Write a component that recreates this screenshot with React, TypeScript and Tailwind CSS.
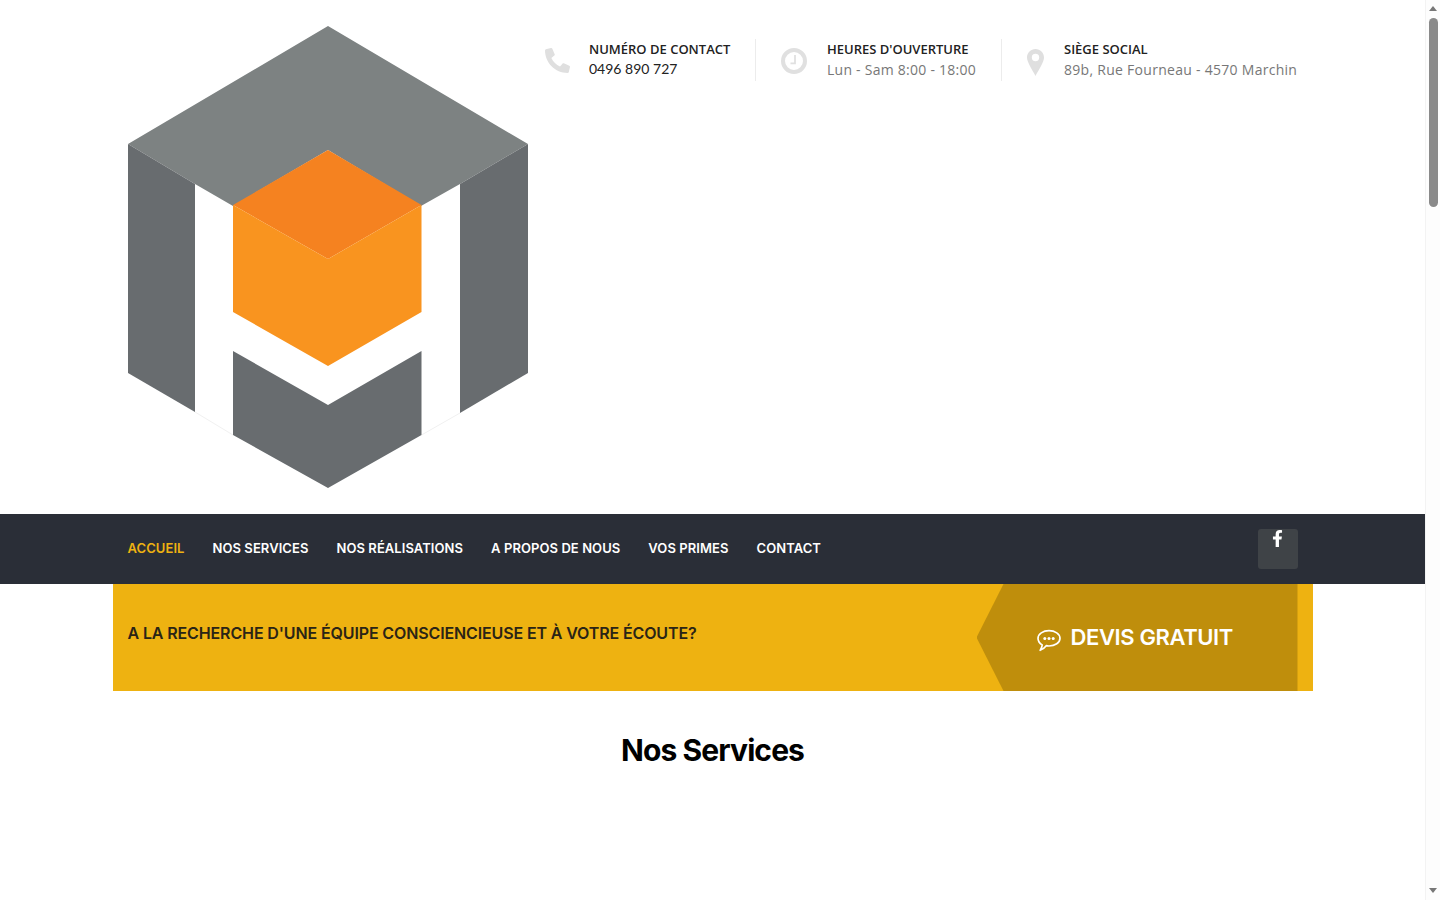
import { FaFacebookF, FaPhone } from "react-icons/fa";

const navItems = [
  "ACCUEIL",
  "NOS SERVICES",
  "NOS RÉALISATIONS",
  "A PROPOS DE NOUS",
  "VOS PRIMES",
  "CONTACT",
];

function Logo() {
  return (
    <svg width="400" height="462" viewBox="128 26 400 462" className="block shrink-0">
      <path d="M195 412 233 435M460 413 421.500 435" stroke="#f1f1f1" strokeWidth="1" />
      <polygon fill="#7d8282" points="128,144 328,26 528,144 460,184 421,206 328,150 233,206 195,184" />
      <polygon fill="#686c6f" points="128,144 195,184 195,412 128,373" />
      <polygon fill="#686c6f" points="528,144 460,184 460,413 528,373" />
      <polygon fill="#f58220" points="328,150 421.5,205 328,259 233,205" />
      <polygon fill="#f9941f" points="233,205 328,259 421.5,205 421.5,312 328,366 233,312" />
      <polygon fill="#686c6f" points="233,351 328,405 421.5,351 421.5,435 328,488 233,435" />
    </svg>
  );
}

function ClockIcon() {
  return (
    <svg width="26" height="26" viewBox="0 0 26 26" className="block">
      <circle cx="13" cy="13" r="11" fill="none" stroke="#e0e0e0" strokeWidth="4" />
      <path d="M14 7v8.300H9.500" fill="none" stroke="#e0e0e0" strokeWidth="1.800" />
    </svg>
  );
}

function MarkerIcon() {
  return (
    <svg width="17" height="27" viewBox="0 0 17 27" className="block">
      <path
        fillRule="evenodd"
        fill="#dfdfdf"
        d="M8.500 0C13.200 0 17 3.800 17 8.500c0 4.800-5.400 12.300-8.500 18.500C5.400 20.800 0 13.300 0 8.500 0 3.800 3.800 0 8.500 0Zm0 4.800a3.700 3.700 0 1 0 0 7.400 3.700 3.700 0 0 0 0-7.400Z"
      />
    </svg>
  );
}

function ChatIcon() {
  return (
    <svg width="24" height="24" viewBox="0 0 24 24" className="mt-[7px] shrink-0">
      <path
        d="M12 1.700c6 0 11 3.200 11 7.600S18 17 12 17c-1 0-1.900-.1-2.800-.3-1.400 1.800-3.300 3.900-6 4.600 1-1.400 1.800-3 2-5.400C2.700 14.500 1 12.100 1 9.300 1 4.900 6 1.700 12 1.700Z"
        fill="none"
        stroke="#fff"
        strokeWidth="1.700"
        strokeLinejoin="round"
      />
      <circle cx="7.800" cy="9.400" r="1.500" fill="#fff" />
      <circle cx="12" cy="9.400" r="1.500" fill="#fff" />
      <circle cx="16.200" cy="9.400" r="1.500" fill="#fff" />
    </svg>
  );
}

function Scrollbar() {
  return (
    <aside className="flex h-screen w-[15px] shrink-0 flex-col items-center border-l border-[#f3f3f3] bg-[#fdfdfd]">
      <div className="mt-[6px] h-0 w-0 border-x-[4.500px] border-b-[5px] border-x-transparent border-b-[#777]" />
      <div className="mt-[7px] h-[189px] w-[9px] rounded-full bg-[#8a8a8a]" />
      <div className="mt-[681px] h-0 w-0 border-x-[4.500px] border-t-[5px] border-x-transparent border-t-[#777]" />
    </aside>
  );
}

export default function App() {
  return (
    <div className="flex h-screen overflow-hidden bg-white font-['Open_Sans',sans-serif]">
      <main className="min-w-0 flex-1">
        <header className="mx-auto flex h-[514px] w-[1200px] px-[15px] pt-[26px]">
          <Logo />
          <div className="mt-[13px] flex h-[42px] pl-[17px]">
            <div className="flex w-[211px] border-r border-[#ececec]">
              <FaPhone className="mt-[9px] h-[25px] w-[25px] scale-x-[-1] text-[#dfdfdf]" />
              <div className="ml-[19.5px]">
                <p className="text-[13px] leading-[20px] font-semibold whitespace-nowrap text-[#222]">NUMÉRO DE CONTACT</p>
                <p className="font-['Lato',sans-serif] text-[14px] leading-[20px] text-[#222]">0496 890 727</p>
              </div>
            </div>
            <div className="flex w-[246px] border-r border-[#ececec] pl-[25px]">
              <div className="mt-[9px]">
                <ClockIcon />
              </div>
              <div className="ml-[20.5px]">
                <p className="text-[13px] leading-[20px] font-semibold whitespace-nowrap text-[#222]">HEURES D'OUVERTURE</p>
                <p className="mt-px text-[14px] leading-[20px] tracking-[0.25px] whitespace-nowrap text-[#777]">Lun - Sam 8:00 - 18:00</p>
              </div>
            </div>
            <div className="flex pl-[25px]">
              <div className="mt-[10px]">
                <MarkerIcon />
              </div>
              <div className="ml-[20.5px]">
                <p className="text-[13px] leading-[20px] font-semibold whitespace-nowrap text-[#222]">SIÈGE SOCIAL</p>
                <p className="mt-px text-[14px] leading-[20px] tracking-[0.28px] whitespace-nowrap text-[#777]">89b, Rue Fourneau - 4570 Marchin</p>
              </div>
            </div>
          </div>
        </header>

        <nav className="h-[70px] bg-[#2a2e37]">
          <div className="mx-auto flex h-full w-[1200px] items-center justify-between px-[15px] font-['Inter',sans-serif]">
            <ul className="flex gap-[28px] text-[13px] font-semibold tracking-[0.07px]">
              {navItems.map((item, i) => (
                <li key={item} className={i === 0 ? "text-[#eeb211]" : "text-white"}>
                  {item}
                </li>
              ))}
            </ul>
            <a className="flex h-[40px] w-[40px] justify-center rounded-[3px] bg-[#3f4347] pt-[1px] text-white">
              <FaFacebookF className="h-[17px] w-[17px]" />
            </a>
          </div>
        </nav>

        <div className="mx-auto flex h-[107px] w-[1200px] justify-between bg-[#eeb211] px-[15px] font-['Inter',sans-serif]">
          <p className="pt-[39px] text-[16px] leading-[20px] font-semibold tracking-[-0.13px] text-[#2a2416]">
            A LA RECHERCHE D'UNE ÉQUIPE CONSCIENCIEUSE ET À VOTRE ÉCOUTE?
          </p>
          <div className="flex w-[321px] items-center gap-[10px] bg-[#bf8e0c] pl-[60px] [clip-path:polygon(27px_0,100%_0,100%_100%,27px_100%,0_50%)]">
            <ChatIcon />
            <span className="text-[22px] font-semibold tracking-[-0.38px] text-white">DEVIS GRATUIT</span>
          </div>
        </div>

        <h2 className="mt-[41px] text-center font-['Inter',sans-serif] text-[30px] leading-[36px] font-bold tracking-[-0.9px] text-black">
          Nos Services
        </h2>
      </main>
      <Scrollbar />
    </div>
  );
}
